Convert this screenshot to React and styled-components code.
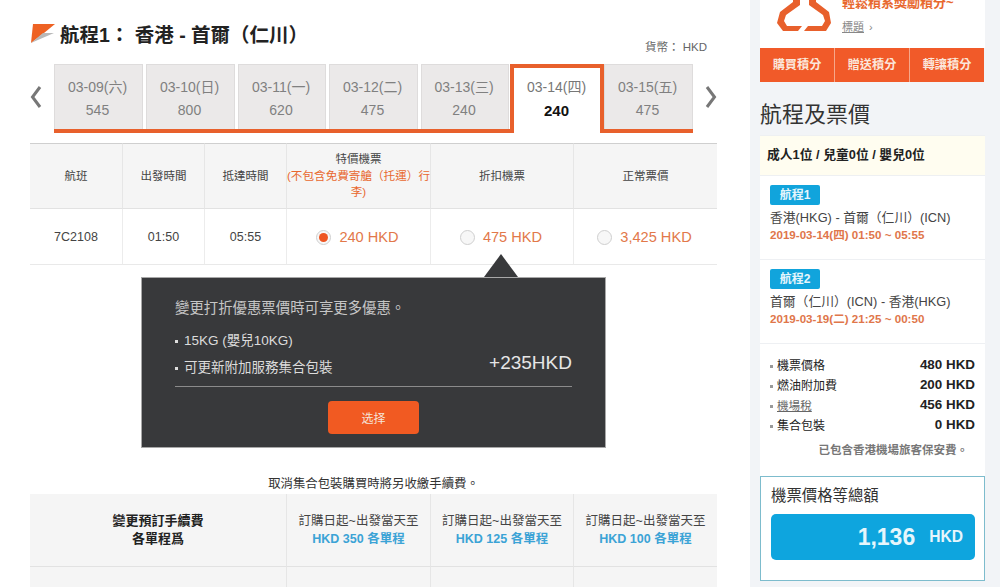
import React from "react";
import styled, { createGlobalStyle } from "styled-components";

const Global = createGlobalStyle`
  html, body { margin: 0; padding: 0; height: 587px; overflow: hidden; background: #fff; }
  body { font-family: "Liberation Sans", "Noto Sans CJK TC", sans-serif; color: #333; }
  * { box-sizing: border-box; }
`;

const Page = styled.div`
  display: flex;
  width: 1000px;
  height: 587px;
  overflow: hidden;
`;

const Main = styled.main`
  width: 750px;
  padding-left: 30px;
  flex: none;
`;

const TitleRow = styled.div`
  display: flex;
  align-items: center;
  gap: 5px;
  margin-top: 20px;
  height: 26px;
`;

const Title = styled.h1`
  margin: 0;
  font-size: 19.5px;
  font-weight: 700;
  color: #222;
  white-space: pre;
`;

const Currency = styled.div`
  width: 677px;
  margin: -8px 0 8px;
  text-align: right;
  font-size: 11.5px;
  line-height: 18px;
  color: #666;
`;

const DateRow = styled.div`
  display: flex;
  align-items: flex-start;
  width: 687px;
  height: 69px;
`;

const Arrow = styled.button`
  flex: none;
  width: ${(p) => (p.$side === "left" ? "24px" : "auto")};
  height: 69px;
  padding: 0;
  border: 0;
  background: none;
  display: flex;
  align-items: center;
  padding-left: ${(p) => (p.$side === "left" ? "0" : "12px")};
  padding-bottom: 4px;
`;

const Tabs = styled.div`
  display: flex;
  gap: 3px;
  width: 639px;
  height: 69px;
  border-bottom: 4px solid #e8602c;
`;

const Tab = styled.div`
  flex: none;
  width: ${(p) => p.$w}px;
  height: 65px;
  background: #ebe9e9;
  border: 1px solid #dedcdc;
  border-bottom: 0;
  text-align: center;
  font-size: 14px;
  color: #808080;
  padding: 11px 2px 0 0;
  line-height: 23px;
`;

const ActiveTab = styled.div`
  flex: none;
  width: 94px;
  height: 69px;
  margin: 0 -3px 0 -2px;
  background: #fff;
  border: 4px solid #e8602c;
  border-bottom: 0;
  text-align: center;
  font-size: 14px;
  color: #777;
  padding: 8px 1px 0 0;
  line-height: 23px;
  position: relative;
  &::after {
    content: "";
    position: absolute;
    left: 0;
    right: 0;
    bottom: -4px;
    height: 4px;
    background: #fff;
  }
`;

const TabPrice = styled.div`
  color: ${(p) => (p.$active ? "#111" : "#808080")};
  font-weight: ${(p) => (p.$active ? 700 : 400)};
  font-size: ${(p) => (p.$active ? "15px" : "14px")};
`;

const Grid = styled.div`
  display: grid;
  width: 687px;
  margin-top: ${(p) => p.$top || 0}px;
  grid-template-columns: ${(p) => p.$cols};
`;

const HeadCell = styled.div`
  height: ${(p) => p.$h}px;
  background: #f5f5f5;
  border-top: ${(p) => (p.$top ? "1px solid #cfcfcf" : "0")};
  border-bottom: 1px solid #e2e2e2;
  border-right: 1px solid #e6e6e6;
  &:nth-child(${(p) => p.$n}n) { border-right: 0; }
  display: flex;
  flex-direction: column;
  align-items: center;
  justify-content: center;
  text-align: center;
  font-size: 11.5px;
  line-height: 16.5px;
  color: #444;
`;

const Warn = styled.span`
  color: #e8682f;
  font-size: 11.6px;
`;

const BodyCell = styled.div`
  height: 56px;
  border-bottom: 1px solid #e9e9e9;
  border-right: 1px solid #ececec;
  &:nth-child(6n) { border-right: 0; }
  display: flex;
  align-items: center;
  justify-content: center;
  font-size: 12.5px;
  color: #444;
`;

const Fare = styled.label`
  display: flex;
  align-items: center;
  gap: 8px;
  font-size: 14.6px;
  color: #e2784a;
  padding: 1px 2px 0 0;
`;

const Radio = styled.span`
  width: 15px;
  height: 15px;
  border-radius: 50%;
  border: 1px solid #cfcfcf;
  background: #f7f7f7;
  display: flex;
  align-items: center;
  justify-content: center;
  &::after {
    content: "";
    width: 9px;
    height: 9px;
    border-radius: 50%;
    background: ${(p) => (p.$on ? "#ee5522" : "transparent")};
  }
`;

const Pop = styled.section`
  position: relative;
  width: 465px;
  height: 171px;
  margin: 12px 0 0 111px;
  background: #38393b;
  border: 1px solid #a8a8a8;
  padding: 20px 33px 0;
  color: #dcdcdc;
`;

const PopArrow = styled.div`
  position: absolute;
  left: 342px;
  top: -24px;
  width: 0;
  height: 0;
  border-left: 17px solid transparent;
  border-right: 17px solid transparent;
  border-bottom: 23px solid #38393b;
`;

const PopHead = styled.div`
  font-size: 14.4px;
  line-height: 20px;
  color: #c6c6c6;
`;

const PopBody = styled.div`
  display: flex;
  justify-content: space-between;
  align-items: flex-end;
  height: 69px;
  padding-bottom: 5px;
  border-bottom: 1px solid #8b8b8b;
`;

const PopList = styled.ul`
  list-style: none;
  margin: 0;
  padding: 0;
`;

const PopItem = styled.li`
  font-size: 13.5px;
  line-height: 27px;
  &::before {
    content: "";
    display: inline-block;
    width: 3px;
    height: 3px;
    background: #ddd;
    margin-right: 6px;
    vertical-align: middle;
  }
`;

const Plus = styled.div`
  font-size: 19px;
  line-height: 26px;
  color: #e6e6e6;
  padding-bottom: 5px;
`;

const PickButton = styled.button`
  display: block;
  width: 91px;
  height: 33px;
  margin: 14px auto 0;
  border: 0;
  border-radius: 4px;
  background: #f15a22;
  color: #f5e4da;
  font: inherit;
  font-size: 12px;
`;

const Note = styled.p`
  width: 687px;
  margin: 27px 0 0;
  height: 19px;
  line-height: 18px;
  text-align: center;
  font-size: 12.4px;
  color: #333;
`;

const FeeLabel = styled.div`
  font-weight: ${(p) => (p.$bold ? 700 : 400)};
  color: ${(p) => (p.$bold ? "#222" : "#444")};
  font-size: ${(p) => (p.$bold ? "13px" : "12.5px")};
  line-height: 18px;
`;

const FeeValue = styled.div`
  font-weight: 700;
  font-size: 12.5px;
  line-height: 18px;
  color: #3ba3d6;
`;

const Side = styled.aside`
  width: 250px;
  flex: none;
  background: #f2f4f7;
  padding: 0 15px 0 10px;
`;

const Promo = styled.div`
  height: 48px;
  background: #fff;
  display: flex;
  overflow: hidden;
`;

const PromoLogo = styled.svg`
  width: 56px;
  height: 42px;
  flex: none;
  margin: -10px 0 0 16px;
`;

const PromoText = styled.div`
  margin: -7px 0 0 10px;
  font-size: 13px;
  font-weight: 700;
  line-height: 20px;
  color: #e8682f;
`;

const PromoMore = styled.div`
  margin-top: 7px;
  font-size: 11px;
  font-weight: 400;
  line-height: 14px;
  color: #888;
  & u { margin-right: 5px; }
`;

const Buy = styled.div`
  display: grid;
  grid-template-columns: 75px 75px 74px;
  width: 224px;
  height: 33px;
`;

const BuyBtn = styled.div`
  background: #f15a29;
  border-right: 1px solid #f6a78a;
  &:last-child { border-right: 0; }
  color: #fbe6da;
  font-size: 12.2px;
  font-weight: 700;
  line-height: 34px;
  text-align: center;
`;

const SideTitle = styled.h2`
  margin: 20px 0 7px;
  height: 27px;
  font-size: 22px;
  line-height: 27px;
  font-weight: 400;
  color: #333;
`;

const Card = styled.div`
  background: #fff;
`;

const Pax = styled.div`
  height: 41px;
  background: #fffdf0;
  border-top: 1px solid #eef0f2;
  border-bottom: 1px solid #eef0f2;
  padding-left: 7px;
  font-size: 12.8px;
  font-weight: 700;
  line-height: 38px;
  color: #222;
`;

const Segment = styled.div`
  height: 84px;
  padding: 9px 10px 0;
  border-bottom: 1px solid #eef0f3;
`;

const Badge = styled.span`
  display: block;
  width: 50px;
  height: 20px;
  border-radius: 2px;
  background: #11a4dc;
  color: #e6f6fc;
  font-size: 12px;
  font-weight: 700;
  line-height: 20px;
  text-align: center;
`;

const Route = styled.div`
  margin-top: 4px;
  font-size: 12.8px;
  line-height: 18px;
  color: #444;
`;

const When = styled.div`
  font-size: 11.6px;
  font-weight: 700;
  line-height: 15px;
  color: #e0764a;
`;

const Fees = styled.ul`
  list-style: none;
  margin: 0;
  padding: 12px 10px 0;
`;

const FeeRow = styled.li`
  display: flex;
  justify-content: space-between;
  height: 20px;
  line-height: 20px;
  font-size: 12px;
  color: #222;
  &::before {
    content: "";
    width: 3px;
    height: 3px;
    background: #999;
    margin: 9px 4px 0 0;
    flex: none;
  }
`;

const FeeName = styled.span`
  flex: 1;
  color: ${(p) => (p.$link ? "#666" : "#222")};
  text-decoration: ${(p) => (p.$link ? "underline" : "none")};
  font-size: ${(p) => (p.$link ? "11.6px" : "12px")};
`;

const FeeAmount = styled.b`
  font-weight: 700;
  font-size: 13.4px;
  line-height: 18px;
`;

const Included = styled.div`
  height: 40px;
  padding: 5px 17px 0 0;
  text-align: right;
  font-size: 11.5px;
  font-weight: 700;
  line-height: 18px;
  color: #777;
`;

const Total = styled.div`
  height: 105px;
  border: 1px solid #7dbccd;
  background: #fff;
  padding: 9px 9px 0 10px;
`;

const TotalLabel = styled.div`
  font-size: 15.4px;
  line-height: 20px;
  color: #333;
`;

const TotalBox = styled.div`
  margin-top: 8px;
  height: 46px;
  border-radius: 5px;
  background: #0ea5de;
  color: #e6f6fc;
  font-weight: 700;
  display: flex;
  align-items: center;
  justify-content: flex-end;
  gap: 14px;
  padding-right: 12px;
`;

const TotalNum = styled.span`
  font-size: 23px;
`;

const TotalUnit = styled.span`
  font-size: 15.6px;
`;

const Chevron = ({ left }) => (
  <svg width="12" height="24" viewBox="0 0 12 24">
    <path d={left ? "M10 2 L2.5 12 L10 22" : "M2 2 L9.5 12 L2 22"} fill="none" stroke="#777" strokeWidth="3" />
  </svg>
);

const Flag = () => (
  <svg width="25" height="21" viewBox="0 0 25 21" style={{ flex: "none" }}>
    <path d="M1 20 L3 1 L25 1 L14 10 Z" fill="#ee6223" />
    <path d="M1 20 L13 10 L24 10 Z" fill="#b9b9b9" />
  </svg>
);

const tabs = [
  ["03-09(六)", "545", 89],
  ["03-10(日)", "800", 89],
  ["03-11(一)", "620", 88],
  ["03-12(二)", "475", 89],
  ["03-13(三)", "240", 88],
];

const fares = [
  ["240 HKD", true],
  ["475 HKD", false],
  ["3,425 HKD", false],
];

const fees = ["HKD 350 各單程", "HKD 125 各單程", "HKD 100 各單程"];

export default function App() {
  return (
    <Page>
      <Global />
      <Main>
        <TitleRow>
          <Flag />
          <Title>航程1： 香港 - 首爾（仁川）</Title>
        </TitleRow>
        <Currency>貨幣： HKD</Currency>
        <DateRow>
          <Arrow $side="left"><Chevron left /></Arrow>
          <Tabs>
            {tabs.map(([d, p, w]) => (
              <Tab key={d} $w={w}>
                {d}
                <TabPrice>{p}</TabPrice>
              </Tab>
            ))}
            <ActiveTab>
              03-14(四)
              <TabPrice $active>240</TabPrice>
            </ActiveTab>
            <Tab $w={89}>
              03-15(五)
              <TabPrice>475</TabPrice>
            </Tab>
          </Tabs>
          <Arrow $side="right"><Chevron /></Arrow>
        </DateRow>
        <Grid $top={10} $cols="93px 82px 82px 144px 143px 143px">
          <HeadCell $h={66} $top $n={6}>航班</HeadCell>
          <HeadCell $h={66} $top $n={6}>出發時間</HeadCell>
          <HeadCell $h={66} $top $n={6}>抵達時間</HeadCell>
          <HeadCell $h={66} $top $n={6}>
            特價機票
            <Warn>(不包含免費寄艙（托運）行李)</Warn>
          </HeadCell>
          <HeadCell $h={66} $top $n={6}>折扣機票</HeadCell>
          <HeadCell $h={66} $top $n={6}>正常票價</HeadCell>
          <BodyCell>7C2108</BodyCell>
          <BodyCell>01:50</BodyCell>
          <BodyCell>05:55</BodyCell>
          {fares.map(([label, on]) => (
            <BodyCell key={label}><Fare><Radio $on={on} />{label}</Fare></BodyCell>
          ))}
        </Grid>
        <Pop>
          <PopArrow />
          <PopHead>變更打折優惠票價時可享更多優惠。</PopHead>
          <PopBody>
            <PopList>
              <PopItem>15KG (嬰兒10KG)</PopItem>
              <PopItem>可更新附加服務集合包裝</PopItem>
            </PopList>
            <Plus>+235HKD</Plus>
          </PopBody>
          <PickButton>选择</PickButton>
        </Pop>
        <Note>取消集合包裝購買時將另收繳手續費。</Note>
        <Grid $cols="257px 144px 143px 143px">
          <HeadCell $h={73} $n={4}>
            <FeeLabel $bold>變更預訂手續費</FeeLabel>
            <FeeLabel $bold>各單程爲</FeeLabel>
          </HeadCell>
          {fees.map((f) => (
            <HeadCell key={f} $h={73} $n={4}>
              <FeeLabel>訂購日起~出發當天至</FeeLabel>
              <FeeValue>{f}</FeeValue>
            </HeadCell>
          ))}
          <HeadCell $h={40} $n={4} />
          <HeadCell $h={40} $n={4} />
          <HeadCell $h={40} $n={4} />
          <HeadCell $h={40} $n={4} />
        </Grid>
      </Main>
      <Side>
        <Promo>
          <PromoLogo viewBox="0 0 56 42">
            <path
              d="M17 2 L17 12 L4 22 L1 33 L7 41 L22 41 L26 36 L11 36 L8 31 L10 25 L24 15 L24 2 Z M33 2 L33 15 L47 25 L49 31 L46 36 L32 36 L28 41 L50 41 L55 33 L53 22 L40 12 L40 2 Z"
              fill="#e8602c"
            />
          </PromoLogo>
          <PromoText>
            輕鬆積系獎勵積分~
            <PromoMore><u>標題</u>›</PromoMore>
          </PromoText>
        </Promo>
        <Buy>
          <BuyBtn>購買積分</BuyBtn>
          <BuyBtn>贈送積分</BuyBtn>
          <BuyBtn>轉讓積分</BuyBtn>
        </Buy>
        <SideTitle>航程及票價</SideTitle>
        <Card>
          <Pax>成人1位 / 兒童0位 / 嬰兒0位</Pax>
          <Segment>
            <Badge>航程1</Badge>
            <Route>香港(HKG) - 首爾（仁川）(ICN)</Route>
            <When>2019-03-14(四) 01:50 ~ 05:55</When>
          </Segment>
          <Segment>
            <Badge>航程2</Badge>
            <Route>首爾（仁川）(ICN) - 香港(HKG)</Route>
            <When>2019-03-19(二) 21:25 ~ 00:50</When>
          </Segment>
          <Fees>
            <FeeRow><FeeName>機票價格</FeeName><FeeAmount>480 HKD</FeeAmount></FeeRow>
            <FeeRow><FeeName>燃油附加費</FeeName><FeeAmount>200 HKD</FeeAmount></FeeRow>
            <FeeRow><FeeName $link>機場稅</FeeName><FeeAmount>456 HKD</FeeAmount></FeeRow>
            <FeeRow><FeeName>集合包裝</FeeName><FeeAmount>0 HKD</FeeAmount></FeeRow>
          </Fees>
          <Included>已包含香港機場旅客保安費。</Included>
        </Card>
        <Total>
          <TotalLabel>機票價格等總額</TotalLabel>
          <TotalBox>
            <TotalNum>1,136</TotalNum>
            <TotalUnit>HKD</TotalUnit>
          </TotalBox>
        </Total>
      </Side>
    </Page>
  );
}
